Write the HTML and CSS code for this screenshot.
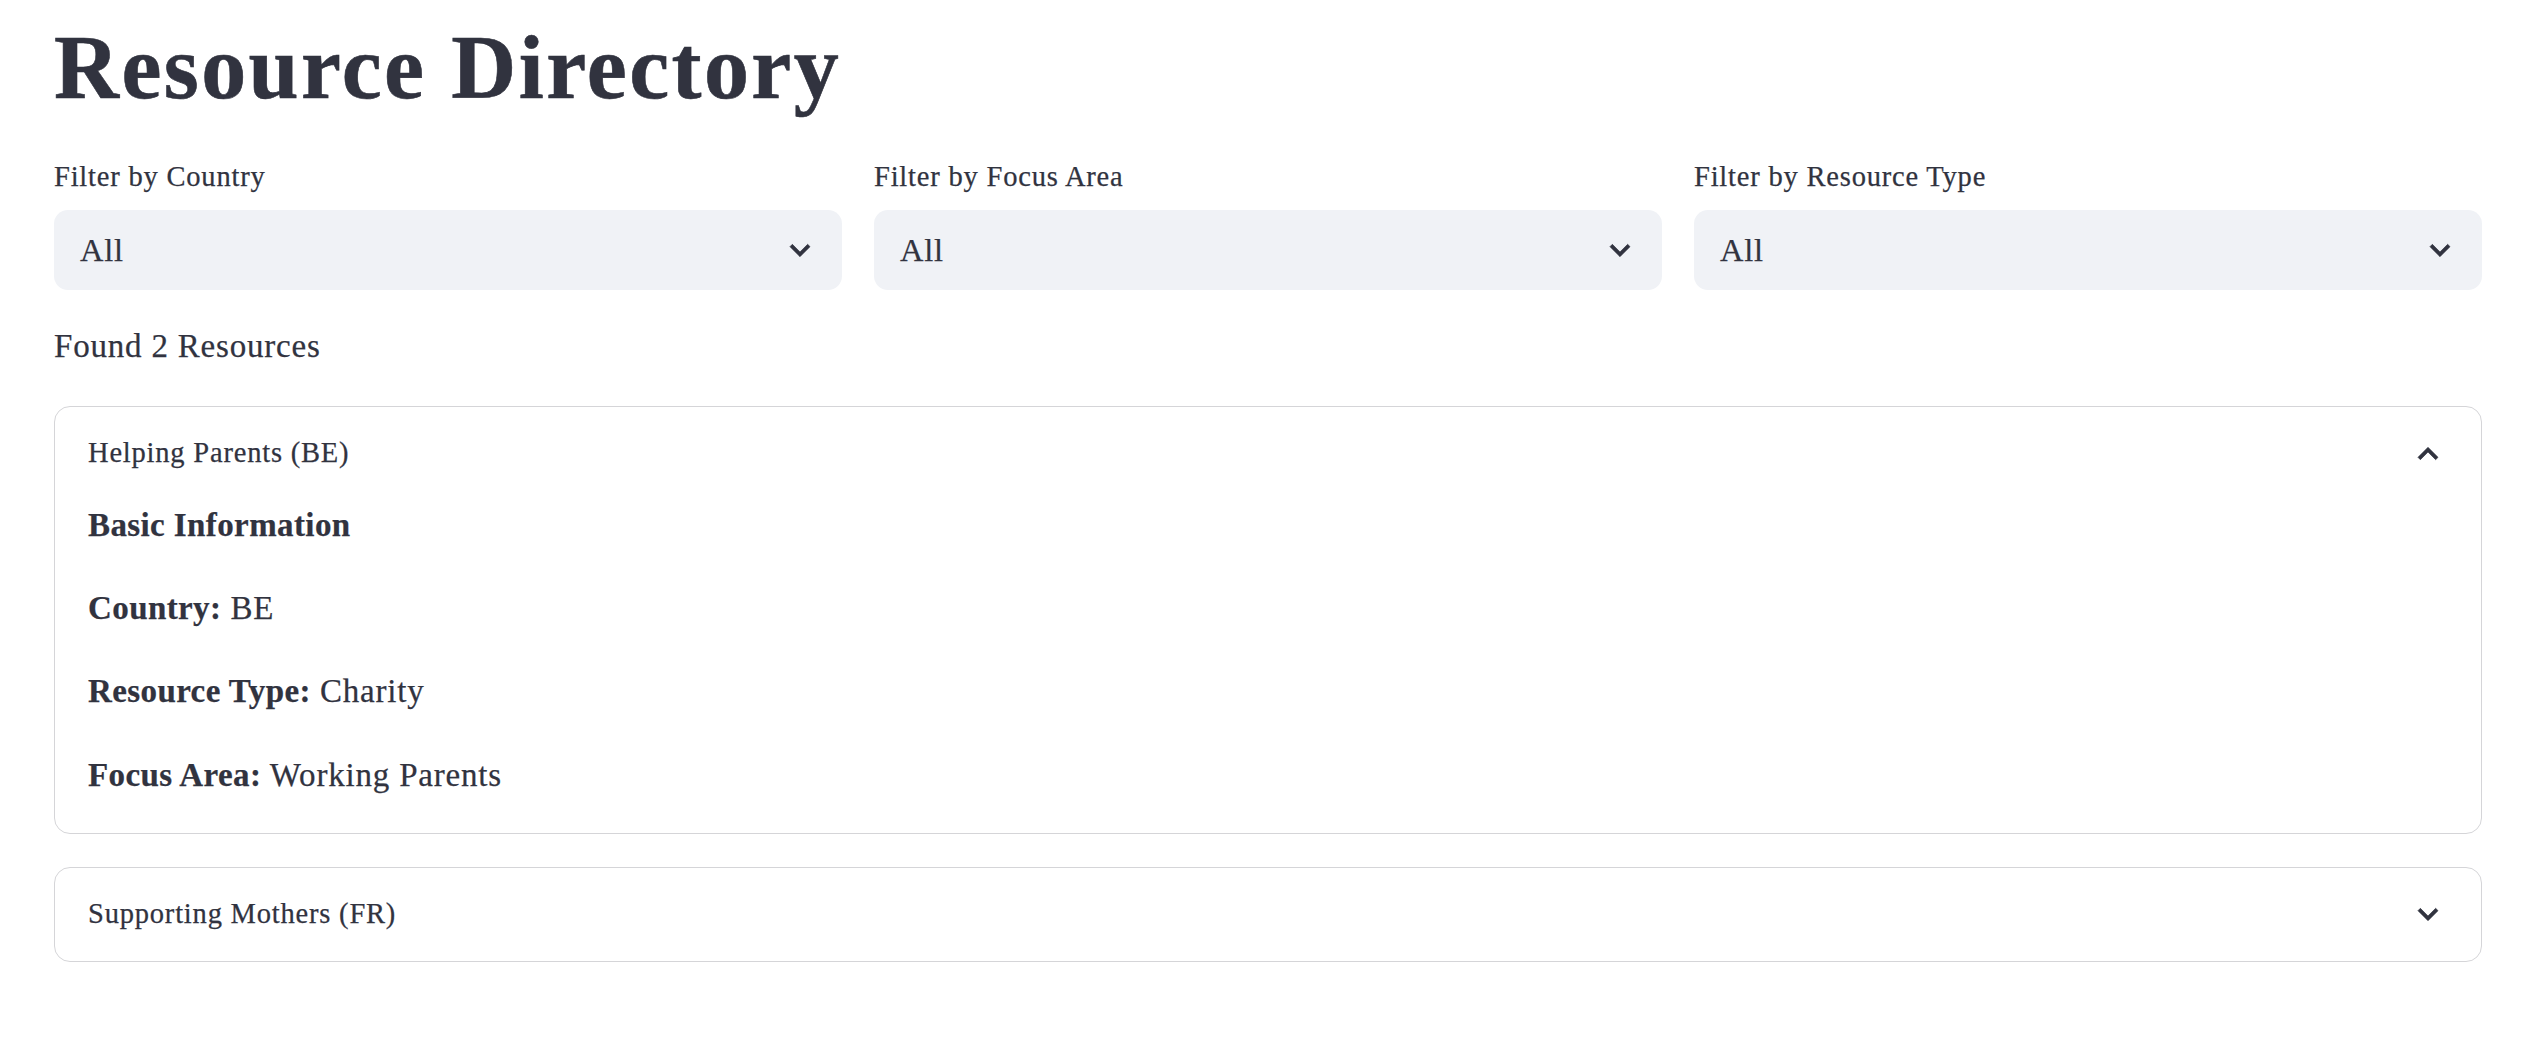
FILE: index.html
```html
<!DOCTYPE html>
<html lang="en">
<head>
<meta charset="utf-8">
<title>Resource Directory</title>
<link rel="stylesheet" href="styles.css">
</head>
<body>
<main class="page">
  <h1 class="title">Resource Directory</h1>

  <section class="filters">
    <div class="filter">
      <label class="filter-label">Filter by Country</label>
      <div class="select">
        <span class="select-value">All</span>
        <svg class="chev" viewBox="0 0 24 24" aria-hidden="true"><path d="M16.59 8.59L12 13.17 7.41 8.59 6 10l6 6 6-6z"/></svg>
      </div>
    </div>
    <div class="filter">
      <label class="filter-label">Filter by Focus Area</label>
      <div class="select">
        <span class="select-value">All</span>
        <svg class="chev" viewBox="0 0 24 24" aria-hidden="true"><path d="M16.59 8.59L12 13.17 7.41 8.59 6 10l6 6 6-6z"/></svg>
      </div>
    </div>
    <div class="filter">
      <label class="filter-label">Filter by Resource Type</label>
      <div class="select">
        <span class="select-value">All</span>
        <svg class="chev" viewBox="0 0 24 24" aria-hidden="true"><path d="M16.59 8.59L12 13.17 7.41 8.59 6 10l6 6 6-6z"/></svg>
      </div>
    </div>
  </section>

  <p class="found">Found 2 Resources</p>

  <section class="expander open">
    <div class="summary">
      <span class="summary-text">Helping Parents (BE)</span>
      <svg class="chev" viewBox="0 0 24 24" aria-hidden="true"><path d="M12 8l-6 6 1.41 1.41L12 10.83l4.59 4.58L18 14z"/></svg>
    </div>
    <div class="content">
      <p><strong>Basic Information</strong></p>
      <p><strong>Country:</strong> BE</p>
      <p><strong>Resource Type:</strong> Charity</p>
      <p><strong>Focus Area:</strong> Working Parents</p>
    </div>
  </section>

  <section class="expander">
    <div class="summary">
      <span class="summary-text">Supporting Mothers (FR)</span>
      <svg class="chev" viewBox="0 0 24 24" aria-hidden="true"><path d="M16.59 8.59L12 13.17 7.41 8.59 6 10l6 6 6-6z"/></svg>
    </div>
  </section>
</main>
</body>
</html>
```

FILE: styles.css
```css
* {
  box-sizing: border-box;
}

html, body {
  margin: 0;
  padding: 0;
  background: #ffffff;
}

body {
  font-family: "Liberation Serif", "DejaVu Serif", serif;
  color: #31333f;
  letter-spacing: 0.8px;
  -webkit-text-stroke: 0.25px #31333f;
}

.page {
  display: flex;
  flex-direction: column;
  padding: 0 42px 0 54px;
}

.title {
  margin: 0;
  padding-top: 24px;
  font-size: 90px;
  line-height: 88px;
  font-weight: 700;
  letter-spacing: 2.4px;
  -webkit-text-stroke: 0.6px #31333f;
}

.filters {
  margin-top: 43px;
  display: grid;
  grid-template-columns: repeat(3, 1fr);
  column-gap: 32px;
}

.filter {
  display: flex;
  flex-direction: column;
}

.filter-label {
  font-size: 28.5px;
  line-height: 44px;
  margin-bottom: 11px;
}

.select {
  height: 80px;
  background: #f0f2f6;
  border-radius: 14px;
  display: flex;
  align-items: center;
  justify-content: space-between;
  padding: 0 22px 0 26px;
}

.select-value {
  font-size: 32.5px;
  line-height: 32px;
}

.chev {
  width: 40px;
  height: 40px;
  fill: #31333f;
  stroke: #31333f;
  stroke-width: 0.4;
  flex: none;
}

.found {
  margin: 31px 0 0 0;
  font-size: 33px;
  line-height: 51.2px;
}

.expander {
  margin-top: 34px;
  border: 1px solid #d5d5d8;
  border-radius: 16px;
}

.expander + .expander {
  margin-top: 33px;
}

.summary {
  display: flex;
  align-items: center;
  justify-content: space-between;
  padding: 24px 33px 24px 33px;
}

.summary-text {
  font-size: 28.5px;
  line-height: 44.8px;
}

.content {
  padding: 0 33px 32px 33px;
}

.content p {
  margin: 0 0 32px 0;
  font-size: 33px;
  line-height: 51.2px;
}

.content p:last-child {
  margin-bottom: 0;
}

.content strong {
  font-weight: 700;
  letter-spacing: 0.4px;
}
```
